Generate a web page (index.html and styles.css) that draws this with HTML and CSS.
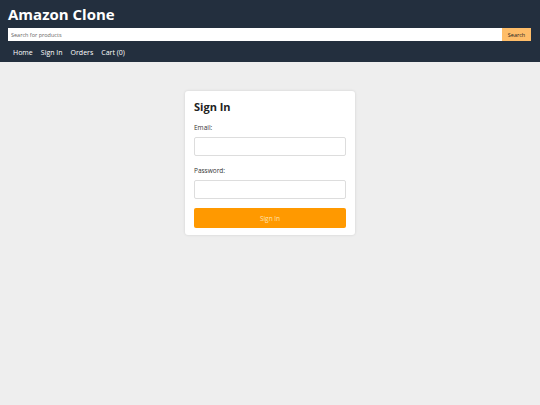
FILE: index.html
```html
<!DOCTYPE html>
<html>
<head>
<meta charset="utf-8">
<title>Amazon Clone</title>
<link rel="stylesheet" href="styles.css">
</head>
<body>
<header class="header">
  <h1 class="logo">Amazon Clone</h1>
  <form class="search">
    <input class="search-input" type="text" placeholder="Search for products">
    <button class="search-btn" type="button">Search</button>
  </form>
  <nav class="nav">
    <a href="#">Home</a>
    <a href="#">Sign In</a>
    <a href="#">Orders</a>
    <a href="#">Cart (0)</a>
  </nav>
</header>
<main class="main">
  <div class="card">
    <h2 class="card-title">Sign In</h2>
    <label class="label">Email:</label>
    <input class="field" type="email">
    <label class="label">Password:</label>
    <input class="field" type="password">
    <button class="submit" type="button">Sign In</button>
  </div>
</main>
</body>
</html>
```
FILE: styles.css
```css
* { box-sizing: border-box; }
html, body { margin: 0; padding: 0; }
body {
  font-family: "Open Sans", "DejaVu Sans", sans-serif;
  background: #eeeeee;
  width: 540px;
  height: 405px;
}
.header {
  background: #232f3e;
  color: #fff;
  padding: 6px 9px 4px 8px;
  height: 62px;
}
.logo {
  margin: 0;
  font-size: 15px;
  line-height: 17px;
  font-weight: 700;
}
.search {
  display: flex;
  margin-top: 5px;
  height: 13px;
}
.search-input {
  flex: 1;
  border: none;
  margin: 0;
  padding: 0 3px;
  font-family: inherit;
  font-size: 5.5px;
  height: 13px;
  background: #fff;
  outline: none;
}
.search-input::placeholder { color: #666; }
.search-btn {
  width: 29px;
  border: none;
  background: #febd69;
  color: #222;
  font-family: inherit;
  font-size: 5.5px;
  padding: 0;
  height: 13px;
}
.nav {
  display: flex;
  margin-top: 5px;
  padding-left: 1px;
}
.nav a {
  color: #fff;
  text-decoration: none;
  font-size: 7px;
  padding: 0 4px;
  line-height: 13px;
}
.main {
  display: flex;
  justify-content: center;
  padding-top: 29px;
}
.card {
  width: 170px;
  background: #fff;
  border-radius: 3px;
  box-shadow: 0 0 3px rgba(0,0,0,0.12);
  padding: 9px 9px 7px 9px;
  display: flex;
  flex-direction: column;
}
.card-title {
  margin: 0 0 9px 0;
  font-size: 11px;
  line-height: 14px;
  font-weight: 700;
  color: #222;
}
.label {
  font-size: 6.5px;
  line-height: 9px;
  color: #333;
  margin-bottom: 5px;
}
.field {
  height: 19px;
  border: 1px solid #ddd;
  border-radius: 2px;
  margin: 0 0 10px 0;
  background: #fff;
}
.submit {
  height: 20px;
  border: none;
  border-radius: 2px;
  background: #ff9900;
  color: #ffe2b0;
  font-family: inherit;
  font-size: 6.5px;
  margin-top: -1px;
}
```
